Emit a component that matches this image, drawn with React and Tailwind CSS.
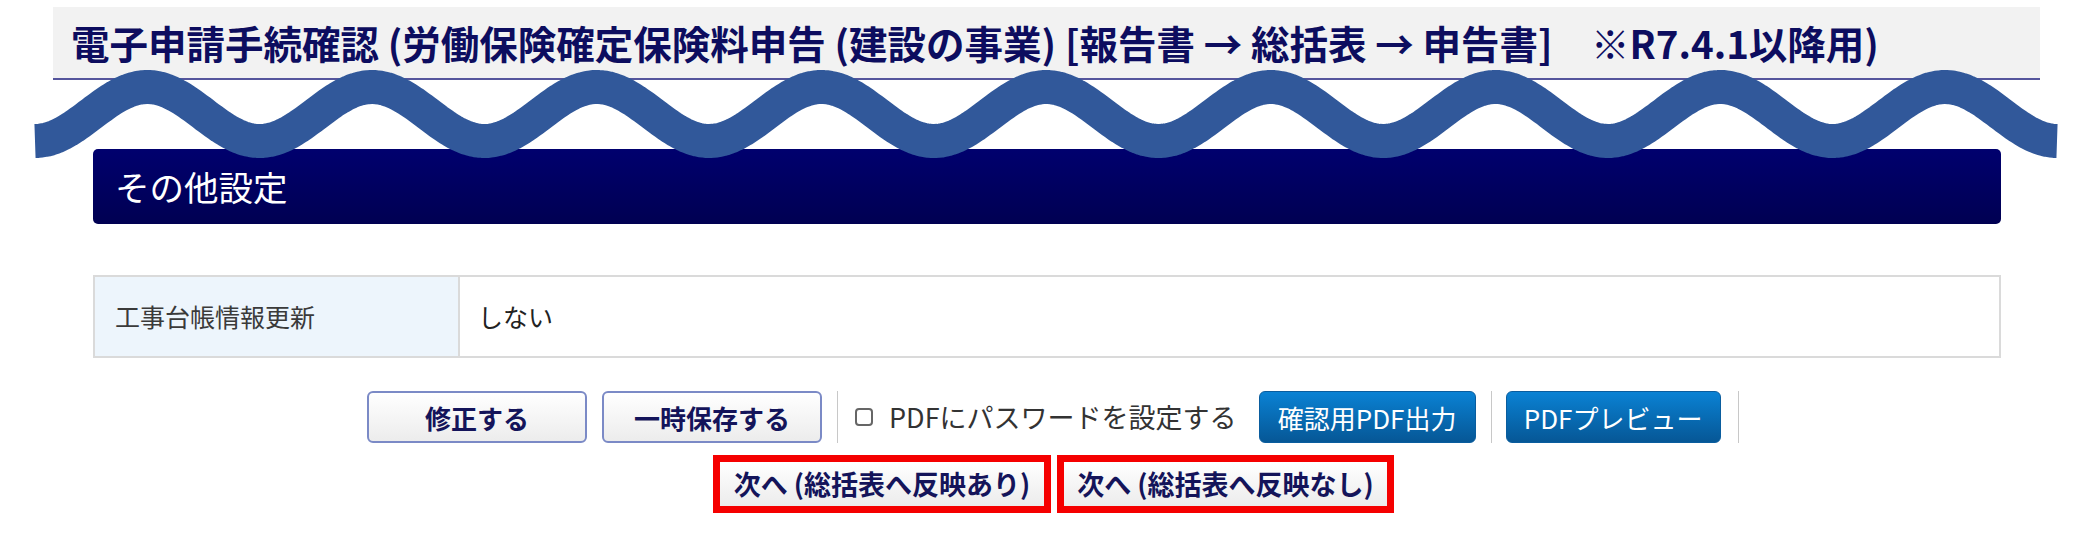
import React from 'react';

const FONT = { fontFamily: '"Noto Sans CJK JP", "Noto Sans", sans-serif' };

// wavy line drawn over the page header (torn-off look)
function Wave() {
  const pts = [];
  for (let x = 35; x <= 2058; x += 3) {
    const y = 114 + 27 * Math.cos((2 * Math.PI * (x - 35)) / 224.7);
    pts.push(`${x},${y.toFixed(1)}`);
  }
  return (
    <svg
      className="absolute left-0 top-0 pointer-events-none"
      width="2078"
      height="200"
      viewBox="0 0 2078 200"
    >
      <path d={`M${pts.join(' L')}`} fill="none" stroke="#31589a" strokeWidth="34" strokeLinejoin="round" />
    </svg>
  );
}

function GrayButton({ children, className }) {
  return (
    <button
      className={
        'h-[52px] rounded-[6px] border-2 border-[#7b8ac6] bg-linear-to-b from-white to-[#ececec] text-[26px] font-bold text-[#14145a] ' +
        (className || '')
      }
    >
      {children}
    </button>
  );
}

function BlueButton({ children, className }) {
  return (
    <button
      className={
        'h-[52px] rounded-[6px] border border-[#0a5d9e] bg-linear-to-b from-[#0a82d4] to-[#065796] text-[26px] text-white ' +
        (className || '')
      }
    >
      {children}
    </button>
  );
}

function NextButton({ children, className }) {
  return (
    <div className={'border-[7px] border-[#f50000] ' + (className || '')}>
      <button className="w-full h-[44px] bg-linear-to-b from-white to-[#ececec] text-[27px] font-bold text-[#14145a]">
        {children}
      </button>
    </div>
  );
}

const Sep = () => <div className="w-px h-[52px] bg-[#c8c8c8]" />;

export default function App() {
  return (
    <div className="relative w-[2078px] h-[552px] bg-white overflow-hidden" style={FONT}>
      {/* page title */}
      <header className="ml-[53px] mr-[38px] mt-[7px] h-[73px] flex items-center pl-[18px] bg-[#f2f2f2] border-b-2 border-[#55559c]">
        <h1 className="text-[38.5px] font-bold text-[#0d0d5f] whitespace-nowrap leading-none">
          電子申請手続確認 (労働保険確定保険料申告 (建設の事業) [報告書 → 総括表 → 申告書]　※R7.4.1以降用)
        </h1>
      </header>

      <Wave />

      {/* section */}
      <div className="ml-[93px] mr-[77px] mt-[69px] h-[75px] rounded-[5px] flex items-center pl-[22px] bg-linear-to-b from-[#00006e] to-[#000052]">
        <span className="text-[34.5px] text-white leading-none">その他設定</span>
      </div>

      <table className="ml-[93px] mt-[51px] w-[1908px] h-[83px] border-collapse">
        <tbody>
          <tr>
            <th className="w-[365px] border-2 border-[#dadada] bg-[#edf5fc] pl-[20px] text-left text-[25px] font-normal text-[#3a3a3a]">
              工事台帳情報更新
            </th>
            <td className="border-2 border-[#dadada] pl-[18px] text-[25px] text-[#222]">しない</td>
          </tr>
        </tbody>
      </table>

      {/* actions */}
      <div className="ml-[367px] mt-[33px] flex items-center">
        <GrayButton className="w-[220px]">修正する</GrayButton>
        <GrayButton className="w-[220px] ml-[15px]">一時保存する</GrayButton>
        <div className="ml-[15px]">
          <Sep />
        </div>
        <label className="ml-[17px] flex items-center text-[27px] text-[#333]">
          <input
            type="checkbox"
            className="appearance-none w-[18px] h-[18px] border-2 border-[#666] rounded-[4px] bg-white"
          />
          <span className="ml-[16px]">PDFにパスワードを設定する</span>
        </label>
        <BlueButton className="w-[217px] ml-[22px]">確認用PDF出力</BlueButton>
        <div className="ml-[15px]">
          <Sep />
        </div>
        <BlueButton className="w-[215px] ml-[14px]">PDFプレビュー</BlueButton>
        <div className="ml-[17px]">
          <Sep />
        </div>
      </div>

      <div className="ml-[713px] mt-[12px] flex gap-[6px]">
        <NextButton className="w-[338px]">次へ (総括表へ反映あり)</NextButton>
        <NextButton className="w-[337px]">次へ (総括表へ反映なし)</NextButton>
      </div>
    </div>
  );
}
